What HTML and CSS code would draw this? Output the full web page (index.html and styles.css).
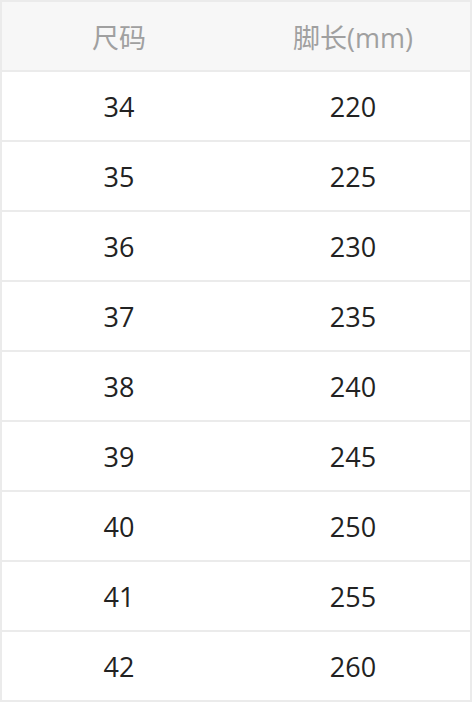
FILE: index.html
```html
<!DOCTYPE html>
<html lang="zh">
<head>
<meta charset="utf-8">
<link rel="stylesheet" href="styles.css">
</head>
<body>
<div class="table">
  <div class="row head"><div class="cell">尺码</div><div class="cell">脚长(mm)</div></div>
  <div class="row"><div class="cell">34</div><div class="cell">220</div></div>
  <div class="row"><div class="cell">35</div><div class="cell">225</div></div>
  <div class="row"><div class="cell">36</div><div class="cell">230</div></div>
  <div class="row"><div class="cell">37</div><div class="cell">235</div></div>
  <div class="row"><div class="cell">38</div><div class="cell">240</div></div>
  <div class="row"><div class="cell">39</div><div class="cell">245</div></div>
  <div class="row"><div class="cell">40</div><div class="cell">250</div></div>
  <div class="row"><div class="cell">41</div><div class="cell">255</div></div>
  <div class="row"><div class="cell">42</div><div class="cell">260</div></div>
</div>
</body>
</html>
```
FILE: styles.css
```css
html, body {
  margin: 0;
  padding: 0;
  background: #ffffff;
}
.table {
  width: 472px;
  box-sizing: border-box;
  border: 2px solid #ebebeb;
  border-bottom: none;
  font-family: "Open Sans", "Noto Sans CJK SC", sans-serif;
  font-size: 27px;
  color: #222222;
}
.row {
  display: grid;
  grid-template-columns: 1fr 1fr;
  height: 70px;
  box-sizing: border-box;
  border-bottom: 2px solid #ebebeb;
}
.cell {
  display: flex;
  align-items: center;
  justify-content: center;
}
.head {
  background: #f7f7f7;
  color: #a0a0a0;
}
```
